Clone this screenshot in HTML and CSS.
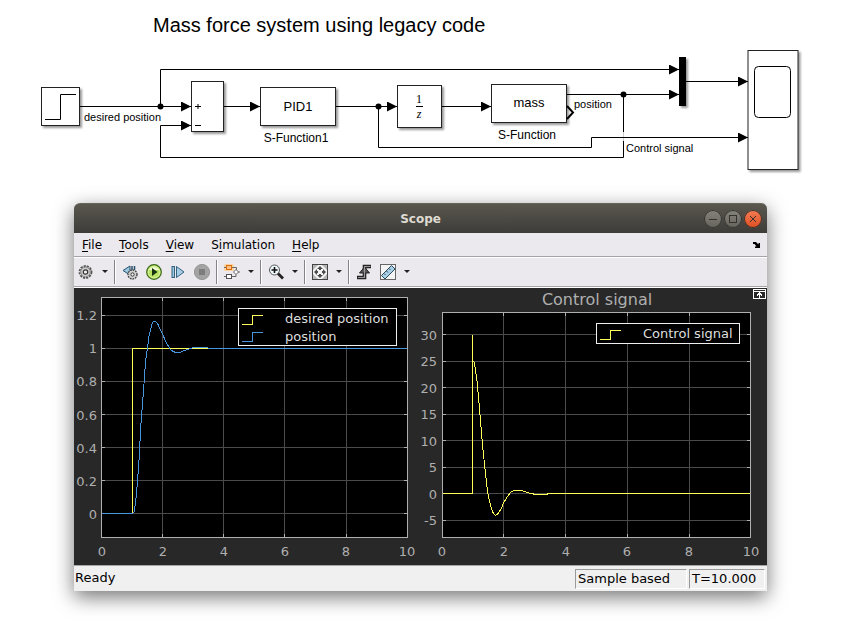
FILE: index.html
```html
<!DOCTYPE html>
<html lang="en">
<head>
<meta charset="utf-8">
<title>Mass force system using legacy code</title>
<link rel="stylesheet" href="styles.css">
</head>
<body>
<main>
  <h1 class="page-title">Mass force system using legacy code</h1>

  <svg class="model" viewBox="0 40 848 163" role="img" aria-label="Block diagram">
    <defs>
      <marker id="arrow" viewBox="0 0 10 10" refX="10" refY="5" markerWidth="10" markerHeight="10" markerUnits="userSpaceOnUse" orient="auto">
        <path d="M0 0 L10 5 L0 10 Z"/>
      </marker>
    </defs>
    <!-- blocks -->
    <g class="block">
      <rect x="41.5" y="87.5" width="38" height="38"/>
      <rect x="191.5" y="81.5" width="32" height="50"/>
      <rect x="260.5" y="87.5" width="75" height="38"/>
      <rect x="397.5" y="85.5" width="44" height="42"/>
      <rect x="491.5" y="84.5" width="75" height="38"/>
      <rect x="748" y="50.5" width="50" height="119"/>
      <rect class="mux" x="679" y="57" width="7" height="49"/>
    </g>
    <!-- signals -->
    <g class="wire">
      <path marker-end="url(#arrow)" d="M80 106.500H191"/>
      <path marker-end="url(#arrow)" d="M160.500 106.500V69.500H679"/>
      <path d="M623.500 94.500V132"/>
      <path marker-end="url(#arrow)" d="M623.500 141V157.500H160.500V125.500H191"/>
      <path class="faded" d="M623.500 132V141"/>
      <path marker-end="url(#arrow)" d="M224 106.500H260"/>
      <path marker-end="url(#arrow)" d="M336 106.500H397"/>
      <path marker-end="url(#arrow)" d="M442 106.500H491"/>
      <path marker-end="url(#arrow)" d="M567 94.500H679"/>
      <path marker-end="url(#arrow)" d="M378.500 106.500V147.500H591.500V137.500H748"/>
      <path marker-end="url(#arrow)" d="M686 81.500H748"/>
    </g>
    <circle cx="160.500" cy="106.500" r="3"/>
    <circle cx="378.500" cy="106.500" r="3"/>
    <circle cx="623.500" cy="94.500" r="3"/>
    <!-- block symbols -->
    <g class="wire">
      <path d="M45 119.500H60.500V94.500H76"/>
      <path d="M195 106.500H201M198 104V109M195 125.500H201"/>
      <path d="M416 106.500H423"/>
      <rect x="754.500" y="66.500" width="36" height="51" rx="4"/>
      <path class="port" d="M567 106L573 112.500L567 119"/>
    </g>
    <g class="block-text">
      <text x="298" y="111">PID1</text>
      <text x="529" y="107">mass</text>
    </g>
    <g class="block-name">
      <text x="296" y="142">S-Function1</text>
      <text x="527" y="139">S-Function</text>
    </g>
    <g class="math">
      <text x="419" y="103">1</text>
      <text x="419" y="118" font-style="italic">z</text>
    </g>
    <g class="signal-name">
      <text x="84" y="121">desired position</text>
      <text x="574" y="108">position</text>
      <text x="626" y="152">Control signal</text>
    </g>
  </svg>

  <section class="window" aria-label="Scope">
    <header class="titlebar">
      <h2>Scope</h2>
      <div class="window-controls">
        <button type="button" aria-label="Minimize"><svg viewBox="0 0 18 18"><path d="M5 9.500H13"/></svg></button>
        <button type="button" aria-label="Maximize"><svg viewBox="0 0 18 18"><rect x="5.500" y="5.500" width="7" height="7"/></svg></button>
        <button type="button" class="close" aria-label="Close"><svg viewBox="0 0 18 18"><path d="M6 6L12 12M12 6L6 12"/></svg></button>
      </div>
    </header>

    <nav class="menubar">
      <button type="button"><u>F</u>ile</button>
      <button type="button"><u>T</u>ools</button>
      <button type="button"><u>V</u>iew</button>
      <button type="button">S<u>i</u>mulation</button>
      <button type="button"><u>H</u>elp</button>
      <button type="button" class="dock" aria-label="Dock"><svg viewBox="0 0 8 6"><path d="M0 0H3L5.500 2.500V1H7V6H2V4.500H3.500L1.500 2H0Z"/></svg></button>
    </nav>

    <div class="toolbar" role="toolbar" aria-label="Scope tools">
      <button type="button" class="tool" aria-label="Settings"><svg viewBox="0 0 16 16">
        <circle cx="7.500" cy="8" r="6" fill="#ddd" stroke="#555" stroke-width="1.800" stroke-dasharray="2.200 1"/>
        <circle cx="7.500" cy="8" r="4.800" fill="#ccc" stroke="#888"/>
        <circle cx="7.500" cy="8" r="2.200" fill="#f5f5f5" stroke="#333" stroke-width="1.200"/></svg></button>
      <button type="button" class="drop" aria-label="Settings options"></button>
      <span class="separator"></span>
      <button type="button" class="tool" aria-label="Step back options"><svg viewBox="0 0 16 16">
        <path d="M8 2V11L1 6.500Z" fill="#9dc6df" stroke="#27516d"/>
        <path d="M10 2V6M12.500 2V6" stroke="#27516d" stroke-width="1.500"/>
        <circle cx="10.500" cy="10.500" r="4.500" fill="#ddd" stroke="#444" stroke-width="1.400" stroke-dasharray="1.800 .8"/>
        <circle cx="10.500" cy="10.500" r="3.400" fill="#ccc"/>
        <circle cx="10.500" cy="10.500" r="1.600" fill="#fff" stroke="#333"/></svg></button>
      <button type="button" class="tool" aria-label="Run"><svg viewBox="0 0 16 16">
        <circle cx="8" cy="8" r="7.300" fill="#b9e264" stroke="#38671b" stroke-width="1.200"/>
        <path d="M2.500 6Q8 0 13.500 6Z" fill="#f2fbd9"/>
        <circle cx="8" cy="8" r="5.800" fill="none" stroke="#e0f5a8" stroke-width=".8"/>
        <path d="M6 4L11.500 8L6 12Z" fill="#17320f"/></svg></button>
      <button type="button" class="tool" aria-label="Step forward"><svg viewBox="0 0 16 16">
        <rect x="2" y="2.500" width="2.500" height="11" fill="#9dc6df" stroke="#34617f"/>
        <path d="M6.500 2.500V13.500L14 8Z" fill="#a5cde5" stroke="#34617f"/></svg></button>
      <button type="button" class="tool" aria-label="Stop" disabled><svg viewBox="0 0 16 16">
        <circle cx="8" cy="8" r="7.600" fill="#a3a3a3" stroke="#969696"/>
        <rect x="5" y="5" width="6" height="6" fill="#7d7d7d"/></svg></button>
      <span class="separator"></span>
      <button type="button" class="tool" aria-label="Highlight block"><svg viewBox="0 0 16 16">
        <rect x="0" y="0" width="10" height="7" rx="1.500" fill="#fbd3a0"/>
        <path d="M0 3.500H12.500V6M0 12.500H12V10.500M14 8H16" fill="none" stroke="#666"/>
        <rect x="2.500" y="1.500" width="5" height="4" fill="#fbc183" stroke="#dc6b12"/>
        <rect x="2.500" y="10.500" width="5" height="4" fill="#fff" stroke="#555"/>
        <path d="M9.500 8L12 5.500L14.500 8L12 10.500Z" fill="#fff" stroke="#666"/></svg></button>
      <button type="button" class="drop" aria-label="Highlight options"></button>
      <span class="separator"></span>
      <button type="button" class="tool" aria-label="Zoom in"><svg viewBox="0 0 16 16">
        <circle cx="6.500" cy="6" r="5" fill="#eef7fb" stroke="#555"/>
        <path d="M10 9.500L15 14.500" stroke="#222" stroke-width="2.800"/>
        <path d="M3.500 6H9.500M6.500 3V9" stroke="#111" stroke-width="1.600"/></svg></button>
      <button type="button" class="drop" aria-label="Zoom options"></button>
      <span class="separator"></span>
      <button type="button" class="tool" aria-label="Scale axes"><svg viewBox="0 0 16 16">
        <rect x=".5" y=".5" width="15" height="15" fill="#f4f4f4" stroke="#444"/>
        <path d="M1 1H6L1 6ZM15 1H10L15 6ZM1 15H6L1 10ZM15 15H10L15 10Z" fill="#b5b5b5"/>
        <path d="M8 2L11 5H9V7H7V5H5ZM8 14L11 11H9V9H7V11H5ZM2 8L5 5V7H6V9H5V11ZM14 8L11 5V7H10V9H11V11Z" fill="#4a4a4a"/>
        <rect x="6" y="6" width="4" height="4" fill="#f4f4f4"/></svg></button>
      <button type="button" class="drop" aria-label="Scale options"></button>
      <span class="separator"></span>
      <button type="button" class="tool" aria-label="Triggers"><svg viewBox="0 0 16 16">
        <path d="M1 13.500H8.500V2.500H15" fill="none" stroke="#222" stroke-width="3.600"/>
        <path d="M8.500 3L13.500 9H3.500Z" fill="#555" stroke="#222"/>
        <path d="M2 13.500H8.500V2.500H14.500" fill="none" stroke="#999" stroke-width="1.200"/></svg></button>
      <button type="button" class="tool" aria-label="Measurements"><svg viewBox="0 0 16 16">
        <rect x=".5" y=".5" width="15" height="15" fill="#f4f4f4" stroke="#666"/>
        <path d="M1.500 11.500L11.500 1.500L15 5L5 15Z" fill="#a9d0e6" stroke="#2b4a60"/>
        <path d="M4 9.500L5.500 11M6.500 7L8 8.500M9 4.500L10.500 6" stroke="#2b4a60"/></svg></button>
      <button type="button" class="drop" aria-label="Measurement options"></button>
    </div>

    <div class="plots">
      <svg viewBox="0 0 336 277" role="img" aria-label="Desired position and position">
        <rect class="area" x="27.500" y="9.500" width="306" height="240"/>
        <path class="grid" d="M88.500 10V249M149.500 10V249M210.500 10V249M272.500 10V249M28 27.500H333M28 60.500H333M28 93.500H333M28 126.500H333M28 159.500H333M28 192.500H333M28 225.500H333"/>
        <path class="ticks" d="M88.500 10v3m0 233v3M149.500 10v3m0 233v3M210.500 10v3m0 233v3M272.500 10v3m0 233v3M28 27.500h3m299 0h3M28 60.500h3m299 0h3M28 93.500h3m299 0h3M28 126.500h3m299 0h3M28 159.500h3m299 0h3M28 192.500h3m299 0h3M28 225.500h3m299 0h3"/>
        <path class="series yellow" d="M28 225.500H58.500V60.500H134"/>
        <path class="series blue" d="M28 225.500H58.500L60 224L61.500 215L62.500 205L63.500 193L65 172L67 135L69.500 103L71.500 74L73.500 60L75 48L78 36L79.500 33.500H81.500L84 36.500L88.500 46L92 54L96 61L99 63.500L102 64.500H106L110 62.500L115 61L119 59.500H134"/>
        <path class="series blue" d="M134 60.500H333"/>
        <rect class="legend" x="164.500" y="20.500" width="158" height="37"/>
        <path class="series yellow" d="M168 36.500H178.500V27.500H189"/>
        <path class="series blue" d="M168 53.500H178.500V44.500H189"/>
        <g class="legend-text"><text x="211" y="35">desired position</text><text x="211" y="53">position</text></g>
        <g class="y-label"><text x="23" y="32">1.2</text><text x="23" y="65">1</text><text x="23" y="98">0.8</text><text x="23" y="132">0.6</text><text x="23" y="165">0.4</text><text x="23" y="198">0.2</text><text x="23" y="231">0</text></g>
        <g class="x-label"><text x="28" y="268">0</text><text x="89" y="268">2</text><text x="150" y="268">4</text><text x="211" y="268">6</text><text x="272" y="268">8</text><text x="333" y="268">10</text></g>
      </svg>
      <svg viewBox="0 0 357 277" role="img" aria-label="Control signal">
        <text class="plot-title" x="187" y="17">Control signal</text>
        <rect class="area" x="32.500" y="24.500" width="308" height="225"/>
        <path class="grid" d="M93.500 25V249M155.500 25V249M217.500 25V249M279.500 25V249M33 46.500H340M33 73.500H340M33 99.500H340M33 126.500H340M33 152.500H340M33 179.500H340M33 205.500H340M33 232.500H340"/>
        <path class="ticks" d="M93.500 25v3m0 218v3M155.500 25v3m0 218v3M217.500 25v3m0 218v3M279.500 25v3m0 218v3M33 46.500h3m301 0h3M33 73.500h3m301 0h3M33 99.500h3m301 0h3M33 126.500h3m301 0h3M33 152.500h3m301 0h3M33 179.500h3m301 0h3M33 205.500h3m301 0h3M33 232.500h3m301 0h3"/>
        <path class="series yellow" d="M33 205.500H62.500V46.500V73.500H64L65.500 82L67 93L68.500 109L70 127L71.500 145L73 162L74.500 176L76 190L77.500 203L79.500 213L81.500 221L83.500 225.500L85.500 227.500L88 225.500L91 221L94 214L97.500 208.500L101 204L104 202.500H111.500L117 204.500L121 205.500L126 206.500H137L138 205.500H340"/>
        <rect class="legend" x="186.500" y="35.500" width="143" height="20"/>
        <path class="series yellow" d="M190 51.500H200.500V42.500H211"/>
        <text class="legend-text" x="233" y="50">Control signal</text>
        <g class="y-label"><text x="27" y="52">30</text><text x="27" y="78">25</text><text x="27" y="105">20</text><text x="27" y="131">15</text><text x="27" y="158">10</text><text x="27" y="184">5</text><text x="27" y="211">0</text><text x="27" y="237">-5</text></g>
        <g class="x-label"><text x="32" y="268">0</text><text x="94" y="268">2</text><text x="156" y="268">4</text><text x="217" y="268">6</text><text x="279" y="268">8</text><text x="341" y="268">10</text></g>
        <path class="restore" d="M343.500 1.500H355.500V10.500H343.500ZM343 3.500H356M349.500 10V5M347 7.500L349.500 5L352 7.500"/>
      </svg>
    </div>

    <footer class="statusbar">
      <span class="status">Ready</span>
      <span class="cell mode">Sample based</span>
      <span class="cell time">T=10.000</span>
    </footer>
  </section>
</main>
</body>
</html>
```
FILE: styles.css
```css
* { box-sizing: border-box; }

body {
  margin: 0;
  min-height: 100vh;
  background: #fff;
  color: #000;
  font-family: "Liberation Sans", Arial, sans-serif;
}

main { padding-bottom: 32px; }

svg { display: block; }

button {
  margin: 0;
  padding: 0;
  border: 0;
  background: none;
  color: inherit;
  font: inherit;
}

.page-title {
  margin: 0;
  padding: 14px 0 4px 153px;
  font-size: 20px;
  line-height: 22px;
  font-weight: 400;
}

/* Block diagram */
.model { width: 100%; }
.block rect {
  fill: #fff;
  stroke: #222;
  filter: drop-shadow(2px 2px 1px rgba(0, 0, 0, .4));
}
.block .mux { fill: #000; stroke: none; }
.wire { fill: none; stroke: #000; }
.wire .faded { stroke: #ccc; }
.wire .port { stroke-width: 2; }
.block-text { font-size: 13px; text-anchor: middle; }
.block-name { font-size: 12px; text-anchor: middle; }
.signal-name { font-size: 11px; }
.math {
  font-family: "Liberation Serif", serif;
  font-size: 12px;
  text-anchor: middle;
}

/* Scope window */
.window {
  margin: 0 81px 0 74px;
  border-radius: 6px 6px 0 0;
  box-shadow: 0 6px 20px rgba(0, 0, 0, .55);
  font-family: "DejaVu Sans", sans-serif;
  font-size: 12px;
}

.titlebar {
  display: grid;
  grid-template-columns: 1fr auto 1fr;
  align-items: center;
  height: 30px;
  border-radius: 6px 6px 0 0;
  background: linear-gradient(#59574e, #3d3c38);
  border-top: 1px solid #66645b;
  color: #dfdbd2;
}
.titlebar h2 {
  grid-column: 2;
  margin: 0;
  font-size: 12px;
  font-weight: 700;
}
.window-controls {
  display: flex;
  justify-content: flex-end;
  gap: 2px;
  padding-right: 5px;
}
.window-controls button {
  width: 18px;
  height: 18px;
  border-radius: 50%;
  background: linear-gradient(#85837c, #65635c);
  box-shadow: inset 0 0 0 1px #33322e;
}
.window-controls svg { fill: none; stroke: #33322e; }
.window-controls .close { background: linear-gradient(#f47c54, #dd4f21); }

.menubar {
  display: flex;
  align-items: center;
  gap: 17px;
  height: 24px;
  padding: 0 6px 0 8px;
  background: #ebe9ed;
  border-bottom: 1px solid #a5a3a8;
}
.menubar u { text-underline-offset: 2px; }
.menubar .dock { margin-left: auto; }
.menubar .dock svg { width: 8px; }

.toolbar {
  display: flex;
  align-items: center;
  height: 30px;
  padding-bottom: 1px;
  background: #ebe9ed;
  border-top: 1px solid #fff;
  border-bottom: 1px solid #a5a3a8;
}
.tool {
  width: 24px;
  padding: 0 4px;
}
.tool svg { width: 16px; }
.drop {
  display: flex;
  justify-content: center;
  width: 14px;
}
.drop::before {
  content: "";
  border: solid transparent;
  border-width: 3px 3px 0;
  border-top-color: #222;
}
.separator {
  width: 2px;
  height: 24px;
  margin: 0 2px;
  background: linear-gradient(90deg, #858388 50%, #fff 50%);
}

.plots {
  display: grid;
  grid-template-columns: 336fr 357fr;
  border-top: 1px solid #fff;
  background: #282828;
}
.plots svg {
  width: 100%;
  overflow: visible;
  font-size: 13px;
  shape-rendering: crispEdges;
}
.area { fill: #000; stroke: #afafaf; }
.grid { stroke: #4b4b4b; }
.ticks { stroke: #afafaf; }
.series { fill: none; }
.yellow { stroke: #ffff5a; }
.blue { stroke: #4796dc; }
.legend { fill: #000; stroke: #eee; }
.legend-text { fill: #dedede; }
.x-label, .plot-title { fill: #afafaf; text-anchor: middle; }
.y-label { fill: #afafaf; text-anchor: end; }
.plots .plot-title { font-size: 16px; }
.restore { fill: none; stroke: #fff; }

.statusbar {
  display: flex;
  align-items: stretch;
  gap: 2px;
  height: 26px;
  padding: 3px 2px 2px 1px;
  border-top: 1px solid #a5a5a5;
  background: #f0f0f0;
  font-size: 13px;
  line-height: 18px;
}
.status { flex: 1; }
.cell {
  padding-left: 2px;
  border: 1px solid;
  border-color: #9a9a9a #fff #fff #9a9a9a;
}
.mode { width: 112px; }
.time { width: 76px; }
```
